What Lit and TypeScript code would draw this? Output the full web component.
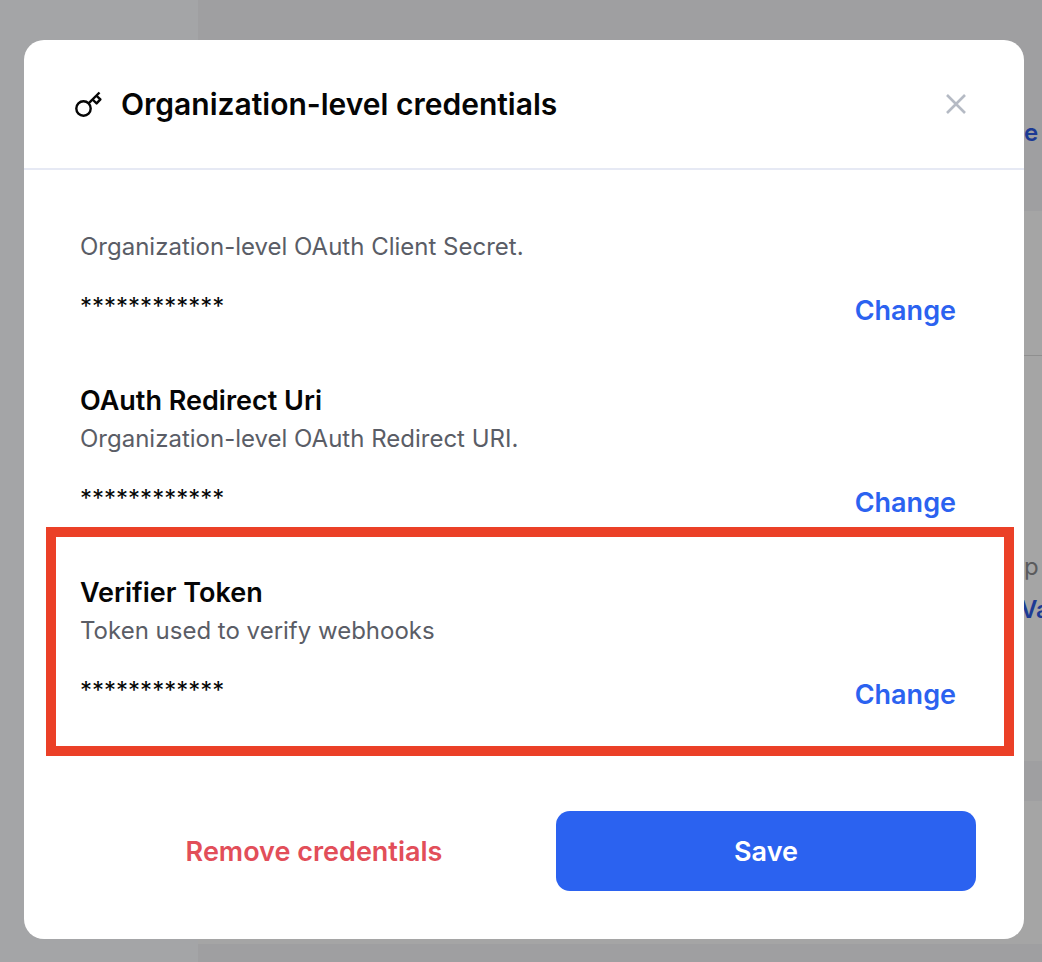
import { LitElement, css, html } from 'lit'
import { customElement } from 'lit/decorators.js'

interface Credential {
  title?: string
  description: string
}

const credentials: Credential[] = [
  { description: 'Organization-level OAuth Client Secret.' },
  { title: 'OAuth Redirect Uri', description: 'Organization-level OAuth Redirect URI.' },
  { title: 'Verifier Token', description: 'Token used to verify webhooks' },
]

@customElement('app-root')
export class AppRoot extends LitElement {
  static styles = css`
    :host {
      display: block;
      position: relative;
      width: 1042px;
      height: 962px;
      overflow: hidden;
      background: #a4a5a7;
      font-family: Inter, 'Liberation Sans', sans-serif;
    }
    .backdrop {
      position: absolute;
      inset: 0;
      overflow: hidden;
    }
    .side {
      position: absolute;
      left: 198px;
      top: 0;
      right: 0;
      bottom: 0;
      background: #9f9fa1;
    }
    .panel {
      position: absolute;
      left: 198px;
      right: 0;
      background: #a5a5a5;
    }
    .panel.top {
      top: 51px;
      height: 160px;
      background: #9f9fa1;
    }
    .panel.mid {
      top: 211px;
      height: 550px;
    }
    .panel.low {
      top: 761px;
      height: 40px;
      background: #9f9fa1;
    }
    .panel.base {
      top: 801px;
      height: 143px;
    }
    .rule {
      position: absolute;
      left: 198px;
      right: 0;
      top: 355px;
      height: 1px;
      background: #8f8f8f;
    }
    .peek {
      position: absolute;
      font-size: 24px;
      line-height: 30px;
      white-space: nowrap;
    }
    .peek.link {
      color: #1c3a94;
      font-weight: 600;
    }
    .peek.text {
      color: #5b5b5d;
    }
    .modal {
      position: absolute;
      left: 24px;
      top: 40px;
      width: 1000px;
      height: 899px;
      background: #fff;
      border-radius: 20px;
      display: flex;
      flex-direction: column;
    }
    header {
      height: 128px;
      box-sizing: border-box;
      border-bottom: 2px solid #e6e9f4;
      height: 130px;
      padding: 0 56px 0 49px;
      display: flex;
      align-items: center;
      gap: 16px;
    }
    header svg.key {
      flex: none;
      width: 32px;
      height: 32px;
    }
    h1 {
      flex: 1;
      margin: 0;
      font-size: 30px;
      line-height: 36px;
      font-weight: 600;
      color: #050505;
    }
    .close {
      flex: none;
      width: 24px;
      height: 24px;
    }
    .list {
      padding: 0 68px 0 56px;
      flex: 1;
    }
    .item {
      height: 192px;
      box-sizing: border-box;
      padding-top: 61px;
      position: relative;
    }
    .item h2 {
      position: absolute;
      top: 21px;
      left: 0;
      margin: 0;
      font-size: 27px;
      line-height: 36px;
      font-weight: 600;
      color: #050505;
    }
    .item p {
      margin: 0;
      font-size: 24px;
      line-height: 32px;
      color: #5a5d66;
    }
    .value {
      margin-top: 28px;
      display: flex;
      justify-content: space-between;
      align-items: flex-start;
    }
    .stars {
      font-size: 24px;
      line-height: 32px;
      color: #050505;
    }
    .change {
      font-size: 27px;
      line-height: 36px;
      font-weight: 600;
      color: #2b62f0;
      margin-top: 2px;
    }
    .actions {
      display: flex;
      align-items: center;
      height: 80px;
      padding: 0 48px 48px 48px;
    }
    .remove {
      width: 484px;
      text-align: center;
      font-size: 27px;
      font-weight: 600;
      color: #e24e59;
    }
    .save {
      width: 420px;
      height: 80px;
      border: 0;
      border-radius: 14px;
      background: #2b62f0;
      color: #fff;
      font: 600 27px Inter, 'Liberation Sans', sans-serif;
    }
    .highlight {
      position: absolute;
      left: 46px;
      top: 527px;
      width: 968px;
      height: 229px;
      box-sizing: border-box;
      border: 10px solid #eb4027;
    }
  `

  render() {
    return html`
      <div class="backdrop">
        <div class="side"></div>
        <div class="panel top"></div>
        <div class="panel mid"></div>
        <div class="panel low"></div>
        <div class="panel base"></div>
        <div class="rule"></div>
        <span class="peek link" style="left:1024px;top:118px">e</span>
        <span class="peek text" style="left:1024px;top:552px">p</span>
        <span class="peek link" style="left:1020px;top:595px">Va</span>
      </div>
      <div class="modal">
        <header>
          <svg class="key" viewBox="0 0 32 32" fill="none" stroke="#050505" stroke-width="2.4" stroke-linejoin="round">
            <circle cx="10.5" cy="20.5" r="7.2"></circle>
            <path d="M15.6 15.4 26.5 4.5"></path>
            <path d="M19.5 11.5 23.6 15.4 27.4 11.4 23.3 7.7"></path>
          </svg>
          <h1>Organization-level credentials</h1>
          <svg class="close" viewBox="0 0 24 24" fill="none" stroke="#b5bac4" stroke-width="2.6">
            <path d="M3 3 21 21M21 3 3 21"></path>
          </svg>
        </header>
        <div class="list">
          ${credentials.map(
            (c) => html`
              <div class="item">
                ${c.title ? html`<h2>${c.title}</h2>` : ''}
                <p>${c.description}</p>
                <div class="value">
                  <span class="stars">************</span>
                  <span class="change">Change</span>
                </div>
              </div>
            `,
          )}
        </div>
        <div class="actions">
          <span class="remove">Remove credentials</span>
          <button class="save">Save</button>
        </div>
      </div>
      <div class="highlight"></div>
    `
  }
}
